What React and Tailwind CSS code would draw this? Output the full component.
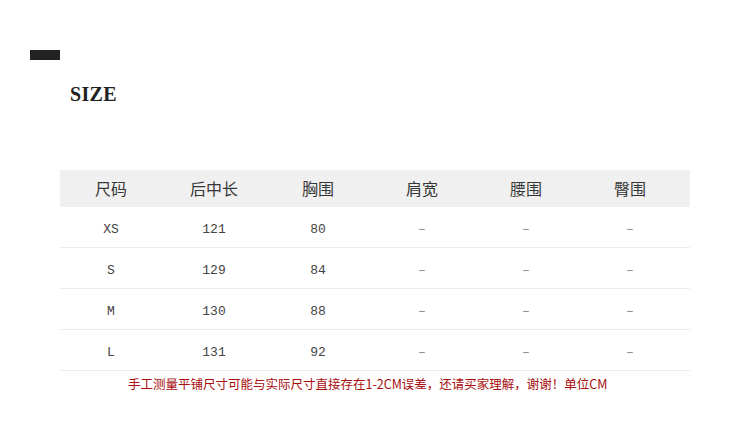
export default function App() {
  const headers = ["尺码", "后中长", "胸围", "肩宽", "腰围", "臀围"];
  const rows = [
    ["XS", "121", "80", "-", "-", "-"],
    ["S", "129", "84", "-", "-", "-"],
    ["M", "130", "88", "-", "-", "-"],
    ["L", "131", "92", "-", "-", "-"],
  ];
  return (
    <div className="w-[750px] h-[439px] bg-white overflow-hidden flex flex-col">
      <div className="mt-[50px] ml-[30px] w-[30px] h-[10px] bg-[#222]" />
      <div
        className="mt-[24px] ml-[70px] h-[20px] text-[20px] leading-none font-bold text-[#222] tracking-[0.3px]"
        style={{ fontFamily: '"Liberation Serif", serif' }}
      >
        SIZE
      </div>
      <div className="mt-[66px] ml-[60px] w-[630px] flex flex-col">
        <div
          className="h-[37px] bg-[#f0f0f0] grid grid-cols-[102px_repeat(5,104px)] items-center pb-[1px]"
          style={{ fontFamily: '"Noto Sans CJK SC", sans-serif' }}
        >
          {headers.map((h) => (
            <div key={h} className="text-center text-[16px] leading-none text-[#383838]">
              {h}
            </div>
          ))}
        </div>
        {rows.map((r) => (
          <div
            key={r[0]}
            className="h-[41px] border-b border-[#ececec] grid grid-cols-[102px_repeat(5,104px)] items-center pt-[4px]"
            style={{ fontFamily: '"Liberation Mono", monospace' }}
          >
            {r.map((c, i) => (
              <div key={i} className="text-center text-[13px] leading-none text-[#444]">
                {c === "-" ? <span className="text-[#888]">–</span> : c}
              </div>
            ))}
          </div>
        ))}
        <div
          className="mt-[7px] pl-[68px] text-[12.5px] leading-none text-[#a80c0c] whitespace-nowrap"
          style={{ fontFamily: '"Noto Sans CJK SC", sans-serif' }}
        >
          手工测量平铺尺寸可能与实际尺寸直接存在1-2CM误差，还请买家理解，谢谢！单位CM
        </div>
      </div>
    </div>
  );
}
